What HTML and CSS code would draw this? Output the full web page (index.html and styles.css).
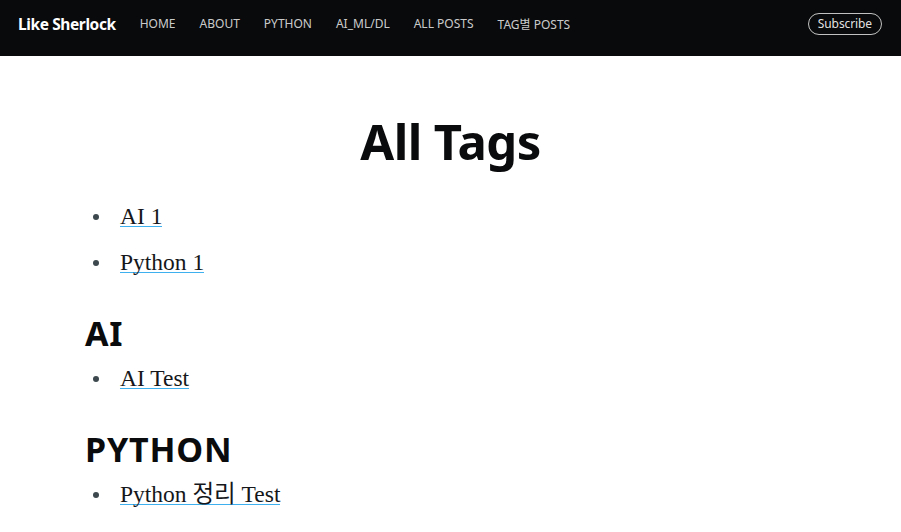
FILE: index.html
```html
<!DOCTYPE html>
<html lang="ko">
<head>
<meta charset="utf-8">
<title>All Tags</title>
<link rel="stylesheet" href="styles.css">
</head>
<body>
<header class="site-nav">
  <div class="nav-left">
    <a class="logo" href="#">Like Sherlock</a>
    <ul class="nav">
      <li><a href="#">HOME</a></li>
      <li><a href="#">ABOUT</a></li>
      <li><a href="#">PYTHON</a></li>
      <li><a href="#">AI_ML/DL</a></li>
      <li><a href="#">ALL POSTS</a></li>
      <li><a href="#">TAG별 POSTS</a></li>
    </ul>
  </div>
  <a class="subscribe" href="#">Subscribe</a>
</header>
<main class="content">
  <h1 class="title">All Tags</h1>
  <ul class="tags">
    <li><a href="#">AI 1</a></li>
    <li><a href="#">Python 1</a></li>
  </ul>
  <h2 class="group">AI</h2>
  <ul class="tags">
    <li><a href="#">AI Test</a></li>
  </ul>
  <h2 class="group">PYTHON</h2>
  <ul class="tags">
    <li><a href="#">Python 정리 Test</a></li>
  </ul>
</main>
</body>
</html>
```
FILE: styles.css
```css
html, body {
  margin: 0;
  padding: 0;
  background: #fff;
}
body {
  font-family: "Noto Sans", "Noto Sans CJK KR", sans-serif;
  color: #0a0b0c;
}
a { text-decoration: none; }

.site-nav {
  display: flex;
  align-items: center;
  justify-content: space-between;
  box-sizing: border-box;
  height: 56px;
  padding: 0 19px 9px 18px;
  background: #090a0b;
}
.nav-left {
  display: flex;
  align-items: center;
}
.logo {
  color: #fff;
  font-size: 15.5px;
  font-weight: 700;
  letter-spacing: -0.4px;
  margin-right: 12px;
}
.nav {
  display: flex;
  list-style: none;
  margin: 0;
  padding: 0;
}
.nav a {
  display: block;
  padding: 0 12px;
  color: rgba(255, 255, 255, 0.8);
  font-size: 12px;
}
.subscribe {
  display: block;
  box-sizing: border-box;
  height: 22px;
  line-height: 20px;
  padding: 0 9px;
  border: 1px solid rgba(255, 255, 255, 0.75);
  border-radius: 11px;
  color: rgba(255, 255, 255, 0.9);
  font-size: 12px;
  letter-spacing: -0.1px;
}

.content {
  padding: 0 85px;
}
.title {
  margin: 57px 0 30px;
  text-align: center;
  font-size: 49px;
  line-height: 56px;
  font-weight: 700;
  letter-spacing: -0.6px;
}
.group {
  margin: 0 0 8px;
  font-size: 34px;
  line-height: 39px;
  font-weight: 700;
  letter-spacing: 0.8px;
}
.tags {
  list-style: none;
  margin: 0 0 35px;
  padding-left: 8px;
  font-family: "Liberation Serif", "Noto Sans CJK KR", serif;
  font-size: 23.5px;
  line-height: 34px;
}
.tags li::before {
  content: "";
  display: inline-block;
  width: 6px;
  height: 6px;
  margin-right: 21px;
  border-radius: 50%;
  background: #3c484e;
  vertical-align: 4px;
}
.tags li + li {
  margin-top: 12px;
}
.tags a {
  color: #15171a;
  background-image: linear-gradient(#3eb0ef, #3eb0ef);
  background-repeat: no-repeat;
  background-size: 100% 1px;
  background-position: 0 calc(100% - 2px);
}
```
